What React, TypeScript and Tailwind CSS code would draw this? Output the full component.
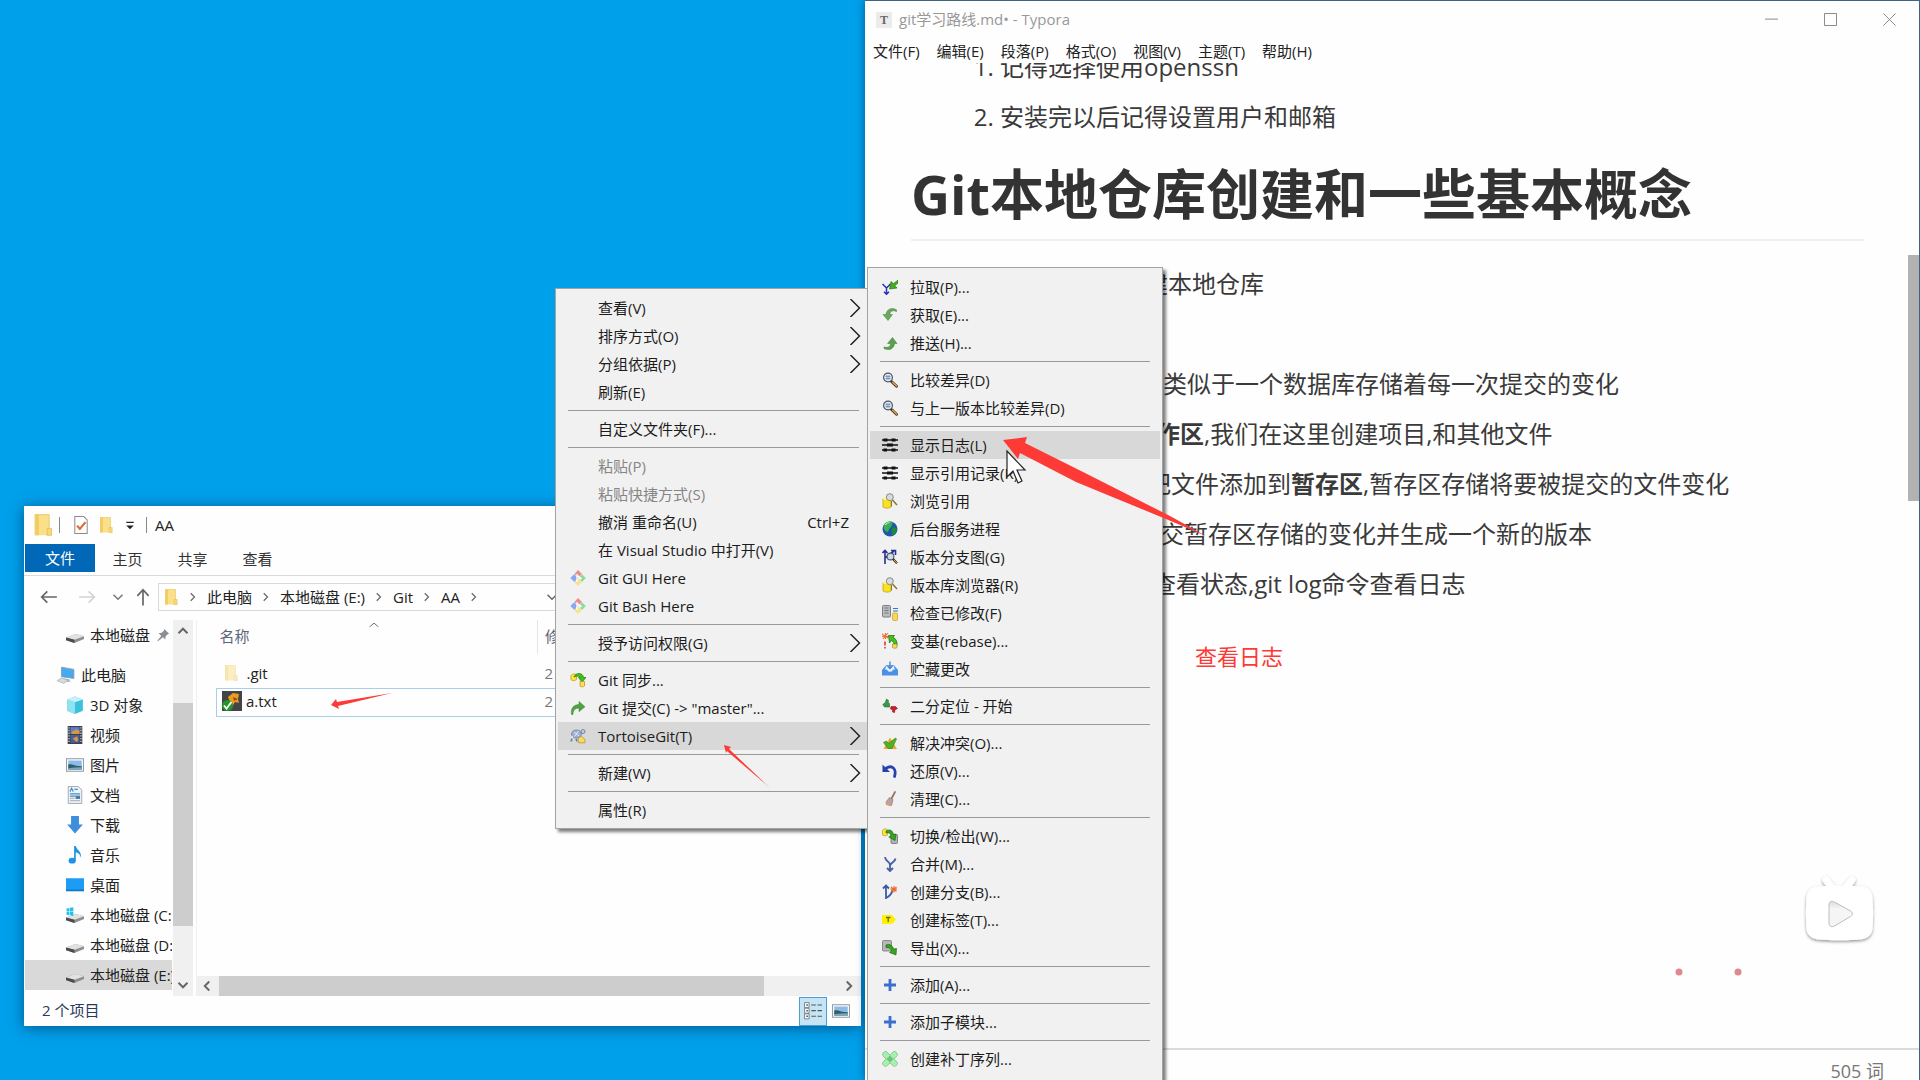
import type { ReactNode } from 'react';

const UI_FONT = "font-['Open_Sans','Noto_Sans_CJK_SC',sans-serif]";

/* ---------- shared icon shapes ---------- */

function Icon({ children, className = 'h-4 w-4' }: { children: ReactNode; className?: string }) {
  return (
    <svg viewBox="0 0 16 16" className={`${className} shrink-0`} fill="none" aria-hidden="true">
      {children}
    </svg>
  );
}

function FolderIcon({ className, faded = false }: { className?: string; faded?: boolean }) {
  return (
    <Icon className={className}>
      <g opacity={faded ? 0.5 : 1}>
        <path d="M2 0.5h10.5v11h1.5v4H2z" fill="#fbe08a" />
        <path d="M2 0.5h3v15H2z" fill="#f1cd63" />
        <path d="M11 10.5h3.2v5H11z" fill="#f6d97d" stroke="#e2b94c" strokeWidth=".5" />
        <path d="M2 0.5h10.5v10" stroke="#e8c35c" strokeWidth=".6" />
      </g>
    </Icon>
  );
}

function DriveIcon({ windows = false }: { windows?: boolean }) {
  return (
    <Icon className="h-[18px] w-[18px]">
      <path d="M0 10.2 8.5 7l7.500 2v2.500L7.500 15 0 12.500z" fill="#8f8f8f" />
      <path d="M0 10.200 8.500 7l7.500 2-8.500 3.200z" fill="#e2e2e2" />
      <path d="M0 10.200 7.500 12.200V15L0 12.600z" fill="#4b4b4b" />
      {windows && (
        <path d="M.5 2.200l2.500-.5v3h-2.500zM3.500 1.600l3-.6v3.700h-3zM.5 5.200h2.500v3l-2.500-.4zM3.500 5.200h3v3.700l-3-.6z" fill="#1fc2ec" />
      )}
    </Icon>
  );
}

function Chevron({ d = 'M5 3l5 5-5 5', color = '#666', width = 1.6, className = 'h-3 w-3' }: { d?: string; color?: string; width?: number; className?: string }) {
  return (
    <Icon className={className}>
      <path d={d} stroke={color} strokeWidth={width} />
    </Icon>
  );
}

const gitDiamond = (
  <Icon>
    <path d="M8 0l4 4-4 3.500L4.500 4z" fill="#f08a8a" />
    <path d="M4.200 4.200L8 8l-3.600 4L.3 8z" fill="#86a9f2" />
    <path d="M12 4.200L15.800 8 12 12 8.500 8z" fill="#8edb98" />
    <path d="M8 8.500l3.800 3.600L8 16l-3.500-3.700z" fill="#f5e28a" />
    <path d="M7 4v8M7 5l3 3" stroke="#fff" strokeWidth="1.300" />
    <circle cx="10.300" cy="8.300" r="1.300" fill="#fff" />
  </Icon>
);

const repoSearch = (
  <Icon>
    <path d="M1 5.500h8v8.500c-1.500 1.500-6.500 1.500-8 0z" fill="#fbe31b" stroke="#b39a1a" strokeWidth=".7" />
    <ellipse cx="5" cy="5.500" rx="4" ry="1.500" fill="#fff29a" />
    <circle cx="7.800" cy="4.200" r="3.500" fill="#d9dadc" stroke="#85878b" />
    <path d="M10.500 7l4.500 5" stroke="#8c7434" strokeWidth="1.500" />
    <path d="M9.500 8v5.500" stroke="#8b7c24" />
  </Icon>
);

const magnifier = (
  <Icon>
    <path d="M9.500 9.500l5 4.700" stroke="#3b2a1a" strokeWidth="2.800" strokeLinecap="round" />
    <path d="M10.500 10.300l4 3.800" stroke="#e8a955" strokeWidth="1.400" strokeLinecap="round" />
    <circle cx="6" cy="5.500" r="4.400" fill="#dfe9f7" stroke="#4e5563" strokeWidth="1.200" />
    <path d="M3.500 4.500h5M3.500 6.500h5M5 3v5M7 3v5" stroke="#6d84ab" strokeWidth=".7" />
  </Icon>
);

const logLines = (
  <Icon>
    <path d="M0 3h16M0 8h16M0 13h16" stroke="#111" strokeWidth="1.300" />
    <path d="M1.500 1.500h4v3h-4zM9.500 1.500h4v3h-4zM5 6.500h6v3H5zM1.500 11.500h3.500v3H1.500zM9.500 11.500h4v3h-4z" fill="#111" />
  </Icon>
);

const plus = (
  <Icon>
    <path d="M8 2v12M2 8h12" stroke="#3a6fd0" strokeWidth="2.800" />
  </Icon>
);

const icons: Record<string, ReactNode> = {
  gitDiamond,
  repoSearch,
  magnifier,
  logLines,
  plus,
  sync: (
    <Icon>
      <path d="M1 3.500C3 1 6 2 6.500 3v4.500C5 9 2 9 .800 7.500z" fill="#ffe23a" stroke="#bb9a12" strokeWidth=".7" />
      <path d="M4 5c2-5 9-4.500 9.500.500H16l-4 4.500L8.500 5.500h2C9.500 4 7 3.500 4 5z" fill="#3fc318" stroke="#1c7a10" strokeWidth=".7" />
      <path d="M10 9.500h4.500V14c-1 1-3.500 1-4.500 0z" fill="#ffdf52" stroke="#bb8d12" strokeWidth=".7" />
    </Icon>
  ),
  commit: (
    <Icon>
      <path d="M1.500 14.500C.500 8 4 4.500 9 4.600V1.500l6 5.200-6 5V8.300C5.500 8 3 10 3 14.500z" fill="#4fa343" stroke="#3b8535" strokeWidth=".5" />
    </Icon>
  ),
  tortoise: (
    <Icon>
      <ellipse cx="6.500" cy="6" rx="5" ry="4" fill="#9eb0d6" stroke="#6d7ea8" strokeWidth=".8" />
      <path d="M4 4l5 4M8.500 3L4.500 8.500M1 10l2-2" stroke="#e8edf8" strokeWidth=".9" />
      <circle cx="13" cy="3.500" r="2" fill="#c6d0e5" stroke="#55607c" strokeWidth=".7" />
      <path d="M2 10.500l-1 3M6 10.500l1 3" stroke="#6d7ea8" strokeWidth="1.600" />
      <path d="M8 11l3-3 4 3.500v3.300H8.600z" fill="#f8dc5e" stroke="#a98e2a" strokeWidth=".7" />
    </Icon>
  ),
  pull: (
    <Icon>
      <path d="M0.500 5L4.500 9 8.500 5M4.500 8.500V15M2 12.800l2.500 2.500L7 12.800" stroke="#2a2fb4" strokeWidth="1.500" />
      <path d="M16 1.200L11.500 4.500 9 2.500 7.500 10l7.500-1-2.200-2.300L16 4z" fill="#46ad21" stroke="#176b10" strokeWidth=".6" />
    </Icon>
  ),
  fetch: (
    <Icon>
      <path d="M14.500 2.800C10 0 4.500 2 4 7.500H1l5 6 4.500-6H7.800C8 4.500 10.500 2.800 14.500 4.500z" fill="#69a95c" stroke="#47803f" strokeWidth=".5" />
    </Icon>
  ),
  push: (
    <Icon>
      <path d="M2 13.500c5 2.500 10 .500 10.500-5h2.500l-4.500-6-5 6h3C8.500 12 6 13 2 12z" fill="#57a24a" stroke="#3a7a35" strokeWidth=".5" />
    </Icon>
  ),
  globe: (
    <Icon>
      <circle cx="8" cy="8" r="7.500" fill="#1b5aa6" />
      <path d="M2 3.500C5-.500 9 0 11 1.500 9.500 3 10.500 5 8.500 6.500 6.500 8 7 11 5 11 3 9.500 1 8.500 2 3.500z" fill="#3fae52" />
      <path d="M10.500 7c2-1 4 0 4.500 1.500-.3 3-2.500 5-4.500 5.800-1-2-1-5 0-7.300z" fill="#1f8a3d" />
      <path d="M3 4c1.500-2 3-2.500 4.500-2.500" stroke="#b9f0df" strokeWidth="1.200" />
    </Icon>
  ),
  graph: (
    <Icon>
      <path d="M3 15V1.500M0.500 4L3 1.500 5.500 4M3 9l9-7M9 1.500h4.500V6" stroke="#26318f" strokeWidth="1.600" />
      <circle cx="8.500" cy="7.500" r="3.400" fill="#cfd8ea" stroke="#4e5875" strokeWidth="1.100" />
      <path d="M11 10l4 4.300" stroke="#3b2a1a" strokeWidth="2.200" />
      <path d="M11.800 10.800l3 3.200" stroke="#e3a75a" strokeWidth="1" />
    </Icon>
  ),
  checkMod: (
    <Icon>
      <rect x=".5" y=".5" width="8" height="11.500" rx="1" fill="#b9bbbe" stroke="#7d7f83" />
      <path d="M2.500 3h4M2.500 5.500h4M2.500 8h4" stroke="#75777b" />
      <path d="M11 3.500h5M11 6h5" stroke="#3578b8" strokeWidth="1.200" />
      <rect x="10.500" y="8" width="5" height="7.500" rx="1.200" fill="#fbd758" stroke="#c69b22" strokeWidth=".7" />
    </Icon>
  ),
  rebase: (
    <Icon>
      <path d="M0 1l6 4M6 0L1 6M3.500 0v6M0 3.500h7" stroke="#f0722c" strokeWidth="1.100" />
      <path d="M3 8.500v4M3 14v1.500" stroke="#e02a2a" strokeWidth="1.500" />
      <path d="M6.500 2.500h6l-1.500 2c3 1 4.500 4 4 8l-3 .500c.500-2.500-.500-4.500-2.500-5.500L7.500 10z" fill="#46c01c" stroke="#176b10" strokeWidth=".7" />
      <path d="M10.500 11h4.500v3.500c-1 1-3.500 1-4.500 0z" fill="#f6d95a" stroke="#8f7b1e" strokeWidth=".6" />
    </Icon>
  ),
  stash: (
    <Icon>
      <path d="M0 9l3-3.500h2.500V9h5V5.500H13L16 9v5.500H0z" fill="#4a90e8" />
      <path d="M2.500 9L4 4.500h8L13.500 9H11l-1 2H6L5 9z" fill="#e9f2fd" stroke="#4a90e8" strokeWidth=".8" />
      <path d="M8 0.500v7M5.500 5L8 7.500 10.500 5" stroke="#3c7ed6" strokeWidth="1.300" />
    </Icon>
  ),
  bisect: (
    <Icon>
      <path d="M4.500 1l2 1.500-.3 2 1.300 1v3.500H2.500L.800 6.500l2.500-2z" fill="#3a9a45" stroke="#256e30" strokeWidth=".6" />
      <path d="M9 8.500h4.500l2 2-2.500 1.300-.5 2.700-2-.5.300-2L8.500 11z" fill="#d01c2c" stroke="#8c1520" strokeWidth=".6" />
    </Icon>
  ),
  resolve: (
    <Icon>
      <path d="M8 2.500L15 14H1.500z" fill="#f1a63a" />
      <path d="M1.500 7.500l3-1.500 2 2.500L13.500 3l1 1-4.500 9.500H6z" fill="#4fb51e" stroke="#2c7d14" strokeWidth=".6" />
    </Icon>
  ),
  revert: (
    <Icon>
      <path d="M4.500 5C10 1.500 15 6 12.500 13.500" stroke="#2a3fae" strokeWidth="2.800" strokeLinecap="round" />
      <path d="M.500 1.500v7.500h7.500z" fill="#2a3fae" />
    </Icon>
  ),
  clean: (
    <Icon>
      <path d="M13 1L9.500 7.500" stroke="#9a7466" strokeWidth="1.800" strokeLinecap="round" />
      <path d="M7.500 6.500l3.500 2-1.500 6-5-1-.5-2.500z" fill="#b9a3a8" stroke="#85686a" strokeWidth=".6" />
      <path d="M4 11.500l5 2.300-.3 1.400-5-1.500z" fill="#e0a060" />
    </Icon>
  ),
  switch: (
    <Icon>
      <path d="M.500 2.500C2 0 5 1 5.500 2v5C4 8 2 8 .500 7z" fill="#ffe636" stroke="#b39a1a" strokeWidth=".7" />
      <rect x="9" y="6.500" width="6.500" height="9" rx="1" fill="#b0b3b0" stroke="#6e726e" strokeWidth=".8" />
      <path d="M4 3c4-2.500 7 0 7.500 3.500l2.500-.5-1 6.500L6.800 9l2.200-1C8.500 5.500 7 4 4 5z" fill="#38a51e" stroke="#155c10" strokeWidth=".6" />
    </Icon>
  ),
  merge: (
    <Icon>
      <path d="M3 1c.500 5 5 4 5 8v6M13.500 2.500C13 6 9.500 6.500 8.200 9M5 12l3 3 3-3" stroke="#4763a4" strokeWidth="1.900" />
    </Icon>
  ),
  branch: (
    <Icon>
      <path d="M4 15V1.500M1 4.500L4 1.500l3 3M4 14c4-2 6-5 6.500-8" stroke="#3a5ba8" strokeWidth="1.800" />
      <path d="M9 3l5.500 4.500M14.500 3L9.500 7.500M12 2v6.500M8.500 5.200h6.500" stroke="#ee6c32" strokeWidth="1.200" />
    </Icon>
  ),
  tag: (
    <Icon>
      <path d="M0 3h10l4 4.500-4 4.500H0z" fill="#fff200" />
      <path d="M4 5.500h4.500M6.200 5.500v4.500" stroke="#6d6820" strokeWidth="1.300" />
    </Icon>
  ),
  export: (
    <Icon>
      <rect x=".5" y=".5" width="9" height="10.500" rx="1" fill="#b4b7b4" stroke="#767a76" strokeWidth=".8" />
      <path d="M4 5c4-1.500 7 1 7.500 4l3-.500-.500 6.500-6.500-2.500 2-1.500C9 8.500 7 7 4 7.500z" fill="#38a51e" stroke="#155c10" strokeWidth=".6" />
    </Icon>
  ),
  patch: (
    <Icon>
      <path d="M3.500 3.500l9 9M12.500 3.500l-9 9" stroke="#5fae68" strokeWidth="6" strokeLinecap="round" />
      <path d="M3.500 3.500l9 9M12.500 3.500l-9 9" stroke="#a8f0b0" strokeWidth="5" strokeLinecap="round" />
      <path d="M8 4.800L11.200 8 8 11.200 4.800 8z" fill="#7fd889" stroke="#5fae68" strokeWidth=".6" />
      <path d="M8 6.500v.8M8 8.700v.8M6.500 8h.8M8.700 8h.8" stroke="#397a42" strokeWidth=".8" />
    </Icon>
  ),
};

/* ---------- context menus ---------- */

type MenuEntry = 'sep' | { label: string; icon?: string; sub?: boolean; off?: boolean; hint?: string; active?: boolean };

const folderMenu: MenuEntry[] = [
  { label: '查看(V)', sub: true },
  { label: '排序方式(O)', sub: true },
  { label: '分组依据(P)', sub: true },
  { label: '刷新(E)' },
  'sep',
  { label: '自定义文件夹(F)...' },
  'sep',
  { label: '粘贴(P)', off: true },
  { label: '粘贴快捷方式(S)', off: true },
  { label: '撤消 重命名(U)', hint: 'Ctrl+Z' },
  { label: '在 Visual Studio 中打开(V)' },
  { label: 'Git GUI Here', icon: 'gitDiamond' },
  { label: 'Git Bash Here', icon: 'gitDiamond' },
  'sep',
  { label: '授予访问权限(G)', sub: true },
  'sep',
  { label: 'Git 同步...', icon: 'sync' },
  { label: 'Git 提交(C) -> "master"...', icon: 'commit' },
  { label: 'TortoiseGit(T)', icon: 'tortoise', sub: true, active: true },
  'sep',
  { label: '新建(W)', sub: true },
  'sep',
  { label: '属性(R)' },
];

const tortoiseMenu: MenuEntry[] = [
  { label: '拉取(P)...', icon: 'pull' },
  { label: '获取(E)...', icon: 'fetch' },
  { label: '推送(H)...', icon: 'push' },
  'sep',
  { label: '比较差异(D)', icon: 'magnifier' },
  { label: '与上一版本比较差异(D)', icon: 'magnifier' },
  'sep',
  { label: '显示日志(L)', icon: 'logLines', active: true },
  { label: '显示引用记录(R)', icon: 'logLines' },
  { label: '浏览引用', icon: 'repoSearch' },
  { label: '后台服务进程', icon: 'globe' },
  { label: '版本分支图(G)', icon: 'graph' },
  { label: '版本库浏览器(R)', icon: 'repoSearch' },
  { label: '检查已修改(F)', icon: 'checkMod' },
  { label: '变基(rebase)...', icon: 'rebase' },
  { label: '贮藏更改', icon: 'stash' },
  'sep',
  { label: '二分定位 - 开始', icon: 'bisect' },
  'sep',
  { label: '解决冲突(O)...', icon: 'resolve' },
  { label: '还原(V)...', icon: 'revert' },
  { label: '清理(C)...', icon: 'clean' },
  'sep',
  { label: '切换/检出(W)...', icon: 'switch' },
  { label: '合并(M)...', icon: 'merge' },
  { label: '创建分支(B)...', icon: 'branch' },
  { label: '创建标签(T)...', icon: 'tag' },
  { label: '导出(X)...', icon: 'export' },
  'sep',
  { label: '添加(A)...', icon: 'plus' },
  'sep',
  { label: '添加子模块...', icon: 'plus' },
  'sep',
  { label: '创建补丁序列...', icon: 'patch' },
];

function ContextMenu({ entries, className }: { entries: MenuEntry[]; className: string }) {
  return (
    <div
      role="menu"
      className={`absolute border border-[#a3a3a3] bg-[#f1f1f1] px-[2px] pt-[5px] pb-1 text-[15px] leading-7 text-[#1c1c1c] shadow-[3px_3px_3px_rgba(0,0,0,0.5)] ${className}`}
    >
      {entries.map((entry, i) =>
        entry === 'sep' ? (
          <div key={i} role="separator" className="mx-[10px] flex h-[9px] items-center">
            <div className="h-px w-full bg-[#999]" />
          </div>
        ) : (
          <button
            key={i}
            type="button"
            role="menuitem"
            disabled={entry.off}
            className={`flex h-7 w-full items-center whitespace-nowrap pl-3 text-left ${entry.active ? 'bg-[#d8d8d8]' : ''} ${entry.off ? 'text-[#858585]' : ''}`}
          >
            <span className="mr-3 flex w-4 shrink-0">{entry.icon && icons[entry.icon]}</span>
            <span className="grow">{entry.label}</span>
            {entry.hint && <span className="mr-5">{entry.hint}</span>}
            {entry.sub && <Chevron d="M4 0l8 8-8 8" color="#222" width={1.3} className="mr-[5px] h-[18px] w-[18px]" />}
          </button>
        ),
      )}
    </div>
  );
}

/* ---------- file explorer ---------- */

const treeItems: { label: string; icon: ReactNode }[] = [
  {
    label: '3D 对象',
    icon: (
      <Icon className="h-[18px] w-[18px]">
        <path d="M1 3l7-2.500L15 3v10l-7 3-7-3z" fill="#3cc0dd" />
        <path d="M1 3l7 2.500V16l-7-3z" fill="#8fe2ef" />
        <path d="M1 3l7-2.500L15 3 8 5.500z" fill="#c4f2f8" />
      </Icon>
    ),
  },
  {
    label: '视频',
    icon: (
      <Icon className="h-[18px] w-[18px]">
        <path d="M1.500 0h13v16h-13z" fill="#3c3f4a" />
        <path d="M4 1h8v6H4z" fill="#5b7fd0" />
        <path d="M4 8h8v7H4z" fill="#4a5c9c" />
        <path d="M5 5l4-2 3 1v3H5zM6 11l4-2 1 4-2 1z" fill="#d59a3c" />
        <path d="M2.700 1v14M13.300 1v14" stroke="#dfe2e8" strokeWidth="1" strokeDasharray="1.200 1.200" />
      </Icon>
    ),
  },
  { label: '图片', icon: <PictureIcon /> },
  {
    label: '文档',
    icon: (
      <Icon className="h-[18px] w-[18px]">
        <path d="M2 .500h9l3 3v12H2z" fill="#f0f3f6" stroke="#9aa4ad" strokeWidth=".8" />
        <path d="M3.500 5l1.500-3 1.500 3M7.500 3h3M3.500 7h9M3.500 9h5" stroke="#3b8fd0" strokeWidth="1" />
        <path d="M8.500 8.500h4v3h-4z" fill="#4d7ba6" />
        <path d="M3.500 11h4M3.500 13h9" stroke="#b3bac1" />
      </Icon>
    ),
  },
  {
    label: '下载',
    icon: (
      <Icon className="h-[18px] w-[18px]">
        <path d="M4.500 0h7v7.500H15L8 15.500 1 7.500h3.500z" fill="#3f8edb" />
      </Icon>
    ),
  },
  {
    label: '音乐',
    icon: (
      <Icon className="h-[18px] w-[18px]">
        <ellipse cx="5.500" cy="13" rx="3.200" ry="2.600" fill="#1c93e3" />
        <path d="M7.200 0h1.500c.500 3.500 5.500 4.500 4.500 10.500-.5-3-2-4.500-4.500-5V13H7.200z" fill="#1c93e3" />
      </Icon>
    ),
  },
  {
    label: '桌面',
    icon: (
      <Icon className="h-[18px] w-[18px]">
        <path d="M0 2h16v11.500H0z" fill="#1c9df5" />
        <path d="M0 12h16v1.500H0z" fill="#1576c4" />
      </Icon>
    ),
  },
  { label: '本地磁盘 (C:)', icon: <DriveIcon windows /> },
  { label: '本地磁盘 (D:)', icon: <DriveIcon /> },
  { label: '本地磁盘 (E:)', icon: <DriveIcon /> },
];

function PictureIcon() {
  return (
    <Icon className="h-[18px] w-[18px]">
      <path d="M.500 2.500h15v11H.500z" fill="#fff" stroke="#8d97a5" strokeWidth=".9" />
      <path d="M2 4h12v8H2z" fill="#8dbbe8" />
      <path d="M2 7.500c3-1 5 1.500 12 1.500v3H2z" fill="#2f5f6d" />
      <path d="M2 10.800c4-.5 8-.5 12-.8v2H2z" fill="#7fa9b5" />
    </Icon>
  );
}

function Explorer() {
  return (
    <section aria-label="AA" className="absolute top-[506px] left-6 flex w-[837px] flex-col bg-[#fefefe] text-[15px] leading-5 text-[#222] shadow-[0_2px_14px_rgba(0,30,70,0.55)]">
      <div className="flex h-[38px] items-center pl-2">
        <FolderIcon className="h-[22px] w-[22px]" />
        <div className="ml-[5px] h-4 w-px bg-[#888]" />
        <Icon className="ml-3 h-[18px] w-[18px]">
          <path d="M2.500 .500h8l3 3v12h-11z" fill="#fff" stroke="#8a8a8a" strokeWidth=".9" />
          <path d="M4.500 8.500l2.500 3 5-6" stroke="#dc6a35" strokeWidth="1.900" />
        </Icon>
        <FolderIcon className="ml-2 h-4 w-4" />
        <Icon className="ml-[10px] h-3 w-3">
          <path d="M3 4.500h10" stroke="#222" strokeWidth="1.600" />
          <path d="M3 8.500h10l-5 5z" fill="#222" />
        </Icon>
        <div className="ml-[10px] h-4 w-px bg-[#888]" />
        <span className="ml-2">AA</span>
      </div>

      <div className="flex h-8 items-start border-b border-[#dadbdc] pl-px text-[#333]">
        <button type="button" className="h-7 w-[70px] bg-[#0167b7] text-white">文件</button>
        <button type="button" className="h-[30px] w-[65px]">主页</button>
        <button type="button" className="h-[30px] w-[65px]">共享</button>
        <button type="button" className="h-[30px] w-[65px]">查看</button>
      </div>

      <div className="flex h-[44px] items-center pb-[2px] pl-4">
        <button type="button" aria-label="后退">
          <Icon className="h-[18px] w-[18px]"><path d="M15 8H1.500M6.500 3l-5 5 5 5" stroke="#666" strokeWidth="1.500" /></Icon>
        </button>
        <button type="button" aria-label="前进" className="ml-5">
          <Icon className="h-[18px] w-[18px]"><path d="M1 8h13.500M9.500 3l5 5-5 5" stroke="#d4d4d4" strokeWidth="1.500" /></Icon>
        </button>
        <button type="button" aria-label="最近" className="ml-4">
          <Chevron d="M2 5l6 6 6-6" width={2} color="#777" />
        </button>
        <button type="button" aria-label="上移" className="ml-[10px]">
          <Icon className="h-[18px] w-[18px]"><path d="M8 15.500V1.500M3 7l5-5.500L13 7" stroke="#666" strokeWidth="1.500" /></Icon>
        </button>
        <div className="ml-[6px] flex h-7 grow items-center border border-[#d9d9d9] pl-1">
          <FolderIcon className="h-4 w-4" />
          <ol className="flex items-center whitespace-nowrap">
            <li className="flex items-center"><Chevron className="mx-2 h-3 w-3" />此电脑</li>
            <li className="flex items-center"><Chevron className="mx-2 h-3 w-3" />本地磁盘 (E:)</li>
            <li className="flex items-center"><Chevron className="mx-2 h-3 w-3" />Git</li>
            <li className="flex items-center"><Chevron className="mx-2 h-3 w-3" />AA</li>
          </ol>
          <Chevron className="mx-2 h-3 w-3" />
          <button type="button" aria-label="历史记录" className="mr-[302px] ml-auto">
            <Chevron d="M2 5l6 6 6-6" width={2} />
          </button>
        </div>
      </div>

      <div className="flex h-[376px]">
        <nav className="flex w-[149px] shrink-0 flex-col overflow-hidden pl-px whitespace-nowrap">
          <a href="#disk" className="flex h-[30px] shrink-0 items-center pl-[41px]">
            <DriveIcon />
            <span className="ml-[6px]">本地磁盘</span>
            <Icon className="ml-[6px] h-[14px] w-[14px]">
              <path d="M9.500 1l5.500 5.500-1.500.500-2.500 2.500-.5 3.500-2.500-2.500L2 15l-.5-.5L6 9 3 6l3.500-.5L9 3z" fill="#8a8f95" />
            </Icon>
          </a>
          <a href="#pc" className="mt-[10px] flex h-[30px] shrink-0 items-center pl-8">
            <Icon className="h-[18px] w-[18px]">
              <path d="M4 1l11 2v8L4 9.500z" fill="#45aaf0" stroke="#8796a5" strokeWidth=".7" />
              <path d="M6 11l5 .8v1l2 .8-4 .6-3-.8z" fill="#a9b2bb" />
              <path d="M0 13l4-2.500 6 2.300-4 2.700z" fill="#d5dade" stroke="#9aa4ad" strokeWidth=".5" />
            </Icon>
            <span className="ml-[6px]">此电脑</span>
          </a>
          {treeItems.map((item, i) => (
            <a key={item.label} href="#tree" className={`flex h-[30px] w-[147px] shrink-0 items-center overflow-hidden pl-[41px] ${i === treeItems.length - 1 ? 'bg-[#d9d9d9]' : ''}`}>
              {item.icon}
              <span className="ml-[6px]">{item.label}</span>
            </a>
          ))}
        </nav>
        <div className="flex w-5 shrink-0 flex-col items-center bg-[#f0f0f0]">
          <Chevron d="M2 11l6-6 6 6" width={2.600} className="mt-[5px] h-3 w-3" />
          <div className="mt-[66px] h-[223px] w-full bg-[#cdcdcd]" />
          <Chevron d="M2 5l6 6 6-6" width={2.600} className="mt-auto mb-[5px] h-3 w-3" />
        </div>
        <div className="ml-[3px] flex min-w-0 grow flex-col border-l border-[#f0f0f0]">
          <Chevron d="M1 11l7-6 7 6" width={1.500} className="-mb-[10px] ml-[172px] h-[10px] w-[10px]" />
          <div className="pl-[19px]">
            <table className="w-full table-fixed border-collapse text-left">
              <thead>
                <tr className="h-[34px] text-[#5d6478]">
                  <th scope="col" className="w-[321px] border-r border-[#e5e5e5] pb-[2px] pl-[3px] font-normal">名称</th>
                  <th scope="col" className="pb-[2px] pl-[7px] font-normal">修</th>
                </tr>
              </thead>
              <tbody>
                <tr className="h-[34px]">
                  <td className="pt-[5px] pl-[6px]">
                    <span className="flex items-center gap-2"><FolderIcon faded className="h-4 w-4" />.git</span>
                  </td>
                  <td className="pt-[5px] pl-[7px] text-[#777]">2</td>
                </tr>
                <tr className="h-7">
                  <td className="border-y border-l border-[#a9cfe8] pb-[2px] pl-[5px]">
                    <span className="flex items-center gap-1">
                      <svg viewBox="0 0 20 20" className="h-5 w-5" aria-hidden="true">
                        <path d="M0 0h20v20H0z" fill="#444348" />
                        <path d="M6 6l5-4 6 1-1 5 1 4-4-1-3 5-2-5z" fill="#ee9b24" />
                        <path d="M11 6l5 2-4 2z" fill="#8c5412" />
                        <circle cx="5.500" cy="14.500" r="5.500" fill="#25962c" />
                        <path d="M2 14.500l2.500 3L9.500 11" stroke="#fff" strokeWidth="1.800" fill="none" />
                      </svg>
                      a.txt
                    </span>
                  </td>
                  <td className="border-y border-[#a9cfe8] pb-[2px] pl-[7px] text-[#777]">2</td>
                </tr>
              </tbody>
            </table>
          </div>
          <div className="mt-auto flex h-5 items-center bg-[#f0f0f0]">
            <Chevron d="M11 2L5 8l6 6" width={2.600} className="mr-[6px] ml-1 h-3 w-3" />
            <div className="h-full w-[545px] bg-[#cdcdcd]" />
            <Chevron d="M5 2l6 6-6 6" width={2.600} className="mr-[6px] ml-auto h-3 w-3" />
          </div>
        </div>
      </div>

      <footer className="flex h-[30px] items-center pr-[11px] pl-[18px] text-[#2b3a5c]">
        <span className="pb-[2px]">2 个项目</span>
        <button type="button" aria-label="详细信息" className="ml-auto flex h-[29px] w-7 items-center justify-center border border-[#4b9fd0] bg-[#c5e5f6]">
          <Icon className="h-[18px] w-[18px]">
            <path d="M.500 .500h4v4.500h-4zM.500 5.500h4V10h-4zM.500 10.500h4V15h-4z" fill="#fff" stroke="#777" strokeWidth=".8" />
            <path d="M2 2.700h1.500M2 7.700h1.500M2 12.700h1.500" stroke="#2f6ea5" strokeWidth="1.300" />
            <path d="M6.500 2.700h4M12 2.700h4M6.500 7.700h4M12 7.700h4M6.500 12.700h4M12 12.700h4" stroke="#555" />
          </Icon>
        </button>
        <button type="button" aria-label="大缩略图" className="ml-[5px]"><PictureIcon /></button>
      </footer>
    </section>
  );
}

/* ---------- editor ---------- */

const editorMenus = ['文件(F)', '编辑(E)', '段落(P)', '格式(O)', '视图(V)', '主题(T)', '帮助(H)'];

const paragraphs: { indent: string; body: ReactNode }[] = [
  { indent: 'pl-[233px]', body: '建本地仓库' },
  { indent: 'pl-[252px]', body: '' },
  { indent: 'pl-[252px]', body: '类似于一个数据库存储着每一次提交的变化' },
  { indent: 'pl-[245px]', body: <><b>作区</b>,我们在这里创建项目,和其他文件</> },
  { indent: 'pl-[236px]', body: <>把文件添加到<b>暂存区</b>,暂存区存储将要被提交的文件变化</> },
  { indent: 'pl-[249px]', body: '交暂存区存储的变化并生成一个新的版本' },
  { indent: 'pl-[241px]', body: '查看状态,git log命令查看日志' },
];

function Editor() {
  return (
    <section aria-label="Typora" className="absolute inset-y-0 right-0 left-[865px] flex flex-col border-t border-r border-[#3f6480] bg-[#fefefe] shadow-[0_0_8px_rgba(0,30,70,0.55)]">
      <header className="flex h-[37px] items-center pl-[11px] text-[15px] text-[#999]">
        <span className="flex h-4 w-4 items-center justify-center bg-[#ececec] font-['Liberation_Serif',serif] text-xs font-bold text-[#666]">T</span>
        <span className="ml-[7px]">git学习路线.md• - Typora</span>
        <div className="mr-[23px] ml-auto flex gap-[46px]">
          <button type="button" aria-label="最小化"><Icon className="h-[13px] w-[13px]"><path d="M0 7.500h16" stroke="#888" strokeWidth="1.200" /></Icon></button>
          <button type="button" aria-label="最大化"><Icon className="h-[13px] w-[13px]"><path d="M.600 .600h14.800v14.800H.600z" stroke="#888" strokeWidth="1.200" /></Icon></button>
          <button type="button" aria-label="关闭"><Icon className="h-[13px] w-[13px]"><path d="M.500 .500l15 15M15.500 .500l-15 15" stroke="#888" strokeWidth="1.200" /></Icon></button>
        </div>
      </header>
      <div className="flex h-[25px] shrink-0 items-center gap-[17px] pl-2 text-[15px] leading-5 text-[#222]">
        {editorMenus.map((label) => (
          <button key={label} type="button">{label}</button>
        ))}
      </div>

      <main className="relative flex min-h-0 grow flex-col overflow-hidden pr-[55px] pl-[46px] text-2xl leading-[34px] whitespace-nowrap text-[#3a3a3a]">
        <ol className="-mt-[13px] list-decimal space-y-4 pl-[89px]">
          <li>记得选择使用openssh</li>
          <li>安装完以后记得设置用户和邮箱</li>
        </ol>
        <h1 className="mt-[26px] border-b-2 border-[#eee] pb-[11px] text-[54px] leading-[68px] font-bold text-[#333]">Git本地仓库创建和一些基本概念</h1>
        <div className="mt-[26px] space-y-4">
          {paragraphs.map(({ indent, body }, i) => (
            <p key={i} className={`h-[34px] ${indent}`}>{body}</p>
          ))}
        </div>
        <div className="absolute top-48 right-0 h-[246px] w-[11px] bg-[#b2b2b2]" />
      </main>

      <footer className="flex h-8 shrink-0 items-start justify-end border-t-2 border-[#dadcdc] pt-[7px] pr-[35px] text-lg leading-7 text-[#777]">
        505 词
      </footer>
    </section>
  );
}

/* ---------- drawings over the desktop ---------- */

function Annotations() {
  return (
    <svg viewBox="0 0 1920 1080" className="pointer-events-none absolute top-0 left-0 h-[1080px] w-[1920px]" aria-hidden="true">
      <path d="M1007 451v26l6-6 5 12 4-2-5-11h8z" fill="#fff" stroke="#222" strokeWidth="1.200" />
      <g fill="#fd3a36">
        <path d="M1003 440l24-3-2 6 60 30 85 43 36 20-40-17-90-37-56-29-2 6z" />
        <path d="M331 705l5-6 1 3 55-9-54 13 1 3z" />
        <path d="M724 745l7 2-2 2 41 39-43-37-1 2z" />
      </g>
      <circle cx="1679" cy="972" r="3.500" fill="#de8990" />
      <circle cx="1738" cy="972" r="3.500" fill="#de8990" />
    </svg>
  );
}

function PlayerBadge() {
  return (
    <button type="button" aria-label="播放" className="absolute right-10 bottom-[131px]">
      <svg viewBox="0 0 80 78" className="h-[78px] w-20" aria-hidden="true">
        <defs>
          <filter id="badge-shadow" x="-20%" y="-20%" width="140%" height="140%">
            <feDropShadow dx="0" dy="1.500" stdDeviation="1.600" floodColor="#000" floodOpacity=".42" />
          </filter>
          <linearGradient id="badge-play" x1="0" y1="0" x2="0" y2="1">
            <stop offset="0" stopColor="#dcdcdc" />
            <stop offset=".3" stopColor="#f6f6f6" />
            <stop offset="1" stopColor="#f4f4f4" />
          </linearGradient>
        </defs>
        <g filter="url(#badge-shadow)">
          <path d="M26 9l7 9M52 9l-7 9" stroke="#fff" strokeWidth="7" strokeLinecap="round" />
          <path d="M17 15.500C30 14 48 14 62 15.500c6 .5 10 5 10.500 11 .8 10 .8 21 0 31-.5 6-4.500 10-10.500 10.700-14 1.300-31 1.300-45 0C11 67.500 7 63.500 6.500 57.500c-.8-10-.8-21 0-31C7 20.500 11 16 17 15.500z" fill="#fff" />
        </g>
        <path d="M29 34c0-3.500 2.500-4.500 5.500-3l16 9c2.500 1.500 2.500 4 0 5.500l-16 9.500c-3 1.500-5.500.5-5.500-3z" fill="url(#badge-play)" stroke="#bdbdbd" strokeWidth="1" />
      </svg>
    </button>
  );
}

export default function App() {
  return (
    <div className={`relative h-screen overflow-hidden bg-[#01a0eb] ${UI_FONT}`}>
      <Explorer />
      <Editor />
      <ContextMenu entries={folderMenu} className="top-[288px] left-[555px] w-[317px]" />
      <ContextMenu entries={tortoiseMenu} className="top-[267px] left-[867px] h-[840px] w-[296px]" />
      <p className="absolute top-[638px] left-[1195px] text-[22px] leading-9 text-[#fd3a36]">查看日志</p>
      <Annotations />
      <PlayerBadge />
    </div>
  );
}
